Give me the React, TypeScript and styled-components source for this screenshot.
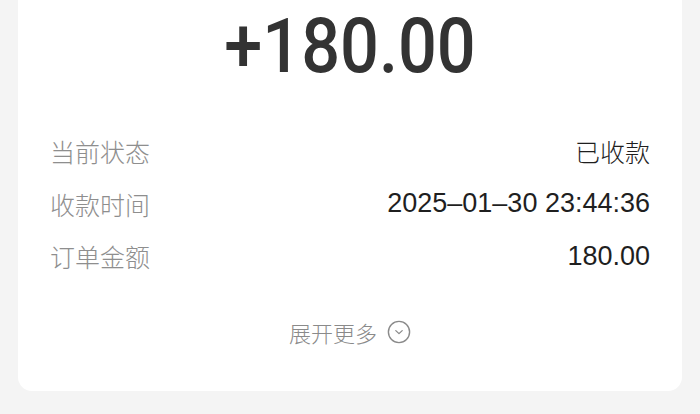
import React from "react";
import styled, { createGlobalStyle } from "styled-components";

const GlobalStyle = createGlobalStyle`
  html, body {
    margin: 0;
    padding: 0;
    background: #f4f4f4;
  }
  body {
    font-family: "Liberation Sans", "Noto Sans CJK SC", sans-serif;
  }
`;

const Page = styled.div`
  width: 700px;
  height: 414px;
  padding: 0 18px;
  box-sizing: border-box;
  overflow: hidden;
`;

const Card = styled.div`
  background: #fff;
  border-radius: 0 0 14px 14px;
  height: 391px;
  padding: 0 32px;
  box-sizing: border-box;
  display: flex;
  flex-direction: column;
`;

const Amount = styled.div`
  font-family: Roboto, "DejaVu Sans", sans-serif;
  font-size: 76px;
  font-weight: 500;
  color: #333;
  text-align: center;
  line-height: 76px;
  margin-top: 8px;
  transform: scaleX(0.9);
`;

const InfoList = styled.div`
  margin-top: 41px;
  display: flex;
  flex-direction: column;
`;

const Row = styled.div`
  display: flex;
  justify-content: space-between;
  align-items: center;
  height: 52.5px;
  font-size: 25px;
`;

const Label = styled.span`
  color: #8e8e8e;
  font-family: "Noto Sans CJK SC", sans-serif;
  font-weight: 300;
`;

const Value = styled.span<{ $cjk?: boolean }>`
  color: #1f1f1f;
  font-size: ${(p) => (p.$cjk ? "25px" : "27px")};
  font-family: ${(p) =>
    p.$cjk
      ? `"Noto Sans CJK SC", sans-serif`
      : `"Liberation Sans", "Noto Sans CJK SC", sans-serif`};
  font-weight: ${(p) => (p.$cjk ? 300 : 400)};
`;

const Expand = styled.button`
  align-self: center;
  margin-top: 33px;
  display: flex;
  align-items: center;
  gap: 10px;
  border: none;
  background: none;
  padding: 0;
  cursor: pointer;
  color: #8a8a8a;
  font-family: "Noto Sans CJK SC", sans-serif;
  font-weight: 300;
  font-size: 22px;
`;

const ChevronCircle = () => (
  <svg width="24" height="24" viewBox="0 0 24 24" fill="none">
    <circle cx="12" cy="12" r="10.6" stroke="#8a8a8a" strokeWidth="1.4" />
    <path d="M8.8 10.6 L12 13.6 L15.2 10.6" stroke="#8a8a8a" strokeWidth="1.3" strokeLinecap="round" strokeLinejoin="round" />
  </svg>
);

const rows = [
  { label: "当前状态", value: "已收款", cjk: true },
  { label: "收款时间", value: "2025–01–30 23:44:36" },
  { label: "订单金额", value: "180.00" },
];

export default function App() {
  return (
    <>
      <GlobalStyle />
      <Page>
        <Card>
          <Amount>+180.00</Amount>
          <InfoList>
            {rows.map((r) => (
              <Row key={r.label}>
                <Label>{r.label}</Label>
                <Value $cjk={r.cjk}>{r.value}</Value>
              </Row>
            ))}
          </InfoList>
          <Expand>
            展开更多
            <ChevronCircle />
          </Expand>
        </Card>
      </Page>
    </>
  );
}
